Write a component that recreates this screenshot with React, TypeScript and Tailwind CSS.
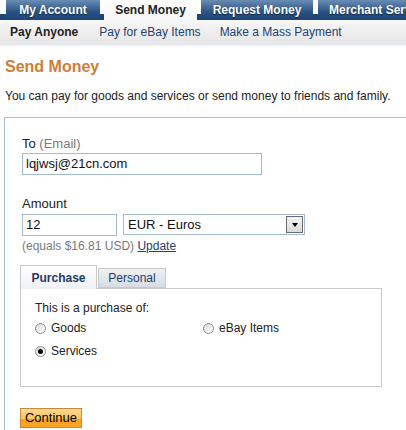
import React from 'react';

const tabs = [
  { label: 'My Account', w: 'w-[94px]', active: false },
  { label: 'Send Money', w: 'w-[93px]', active: true },
  { label: 'Request Money', w: 'w-[112px]', active: false },
  { label: 'Merchant Services', w: 'w-[120px]', active: false },
];

function Radio({ checked }: { checked?: boolean }) {
  return (
    <span className="w-[11px] h-[11px] rounded-full border border-[#8f8f8f] bg-[linear-gradient(135deg,#d8d8d8,#ffffff)] flex items-center justify-center shrink-0">
      {checked && <span className="w-[5px] h-[5px] rounded-full bg-black" />}
    </span>
  );
}

export default function App() {
  return (
    <div className="w-[406px] h-[430px] overflow-hidden bg-white font-['Liberation_Sans',Arial,sans-serif] text-[#333]">
      {/* top tabs */}
      <div className="h-[20px] flex pl-[6px] overflow-hidden bg-[linear-gradient(to_bottom,#ffffff_14px,#1f4776_14px)]">
        {tabs.map((t, i) => (
          <div
            key={t.label}
            className={`${t.w} h-[20px] shrink-0 flex justify-center pt-[1px] text-[12px] font-bold whitespace-nowrap ${
              i === 2 ? 'mr-[5px]' : 'mr-[4px]'
            } ${
              t.active
                ? 'bg-[linear-gradient(to_bottom,#ffffff,#f6f6f6)] text-[#222]'
                : 'bg-[linear-gradient(to_bottom,#6a8db4,#2a5283_60%,#1d4474)] text-white [text-shadow:0_1px_1px_#0d2440]'
            } ${i === 3 ? 'justify-start pl-[11px]' : ''}`}
          >
            {t.label}
          </div>
        ))}
      </div>
      {/* sub nav */}
      <div className="h-[24px] flex items-center text-[12px] bg-[linear-gradient(to_bottom,#f7f7f7,#e6e6e6)]">
        <span className="ml-[10px] font-bold text-[#222]">Pay Anyone</span>
        <span className="ml-[21px] text-[#23426e]">Pay for eBay Items</span>
        <span className="ml-[19px] text-[#23426e]">Make a Mass Payment</span>
      </div>
      <div className="h-[3px] bg-[linear-gradient(to_bottom,#dfe5ec,#ffffff)]" />

      <h1 className="ml-[5px] mt-[11px] text-[16px] leading-[18px] font-bold text-[#cf7d34]">Send Money</h1>
      <p className="ml-[5px] mt-[13px] text-[12px] leading-[14px] text-[#222]">
        You can pay for goods and services or send money to friends and family.
      </p>

      {/* form box */}
      <div className="ml-[4px] mt-[14px] w-[420px] border-t border-l border-[#a9bdd6] pl-[17px] pt-[18px] pb-[40px]">
        <div className="text-[13px] leading-[15px] text-[#222]">
          To <span className="text-[#7a7a7a]">(Email)</span>
        </div>
        <div className="mt-[2px] w-[240px] h-[22px] border border-[#a5b9d1] flex items-center pl-[3px] text-[13px] text-[#111]">
          lqjwsj@21cn.com
        </div>

        <div className="mt-[21px] text-[13px] leading-[15px] text-[#222]">Amount</div>
        <div className="mt-[3px] flex items-start gap-[6px]">
          <div className="w-[95px] h-[22px] border border-[#a5b9d1] flex items-center pl-[3px] text-[13px] text-[#111]">12</div>
          <div className="w-[182px] h-[21px] border border-[#a5b9d1] flex items-center justify-between pl-[4px] pr-[1px] text-[13px] text-[#111]">
            <span>EUR - Euros</span>
            <span className="w-[17px] h-[17px] border border-[#6b6b6b] bg-[linear-gradient(to_bottom,#f4f4f4,#d9d9d9)] flex items-center justify-center">
              <span className="w-0 h-0 border-l-[3.5px] border-r-[3.5px] border-t-[4px] border-l-transparent border-r-transparent border-t-black" />
            </span>
          </div>
        </div>
        <div className="mt-[3px] text-[12px] leading-[14px] text-[#7a7a7a]">
          (equals $16.81 USD) <span className="underline text-[#23426e]">Update</span>
        </div>

        {/* purchase tabs */}
        <div className="mt-[12px] -ml-[2px] w-[362px]">
          <div className="flex items-end">
            <div className="w-[77px] h-[24px] border border-b-0 border-[#c9c9c9] bg-[linear-gradient(to_bottom,#ffffff,#eef0f3)] flex items-center justify-center text-[12px] font-bold text-[#1f3c66] relative -mb-px z-10">
              Purchase
            </div>
            <div className="ml-[1px] w-[68px] h-[20px] border border-[#c9c9c9] bg-[linear-gradient(to_bottom,#eef1f4,#d6dce3)] flex items-center justify-center text-[12px] text-[#1f3c66]">
              Personal
            </div>
          </div>
          <div className="h-[99px] border border-[#c9c9c9] pl-[14px] pt-[12px] text-[12px] text-[#222]">
            <div className="leading-[14px]">This is a purchase of:</div>
            <div className="mt-[5px] h-[16px] flex items-center leading-[16px]">
              <div className="w-[168px] flex items-center gap-[5px]">
                <Radio />
                <span>Goods</span>
              </div>
              <div className="flex items-center gap-[5px]">
                <Radio />
                <span>eBay Items</span>
              </div>
            </div>
            <div className="mt-[7px] h-[16px] flex items-center gap-[5px] leading-[16px]">
              <Radio checked />
              <span>Services</span>
            </div>
          </div>
        </div>

        <button className="mt-[21px] -ml-[2px] w-[62px] h-[20px] border border-[#c58a3c] bg-[linear-gradient(to_bottom,#ffd98f,#ffc45c_55%,#f9a21f_56%,#f7a52a)] text-[13px] leading-[18px] text-black">
          Continue
        </button>
      </div>
    </div>
  );
}
